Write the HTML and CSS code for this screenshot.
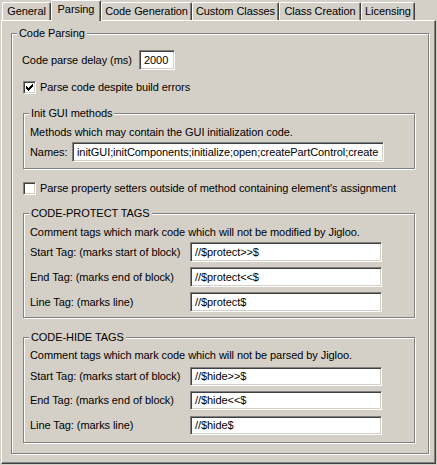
FILE: index.html
```html
<!DOCTYPE html>
<html>
<head>
<meta charset="utf-8">
<link rel="stylesheet" href="styles.css">
</head>
<body>
<div class="tabs">
  <div class="tab w-general">General</div>
  <div class="tab active w-parsing">Parsing</div>
  <div class="tab w-codegen">Code Generation</div>
  <div class="tab w-custom">Custom Classes</div>
  <div class="tab w-creation">Class Creation</div>
  <div class="tab w-licensing">Licensing</div>
</div>
<div class="panel">
  <div class="group outer">
    <span class="gtitle">Code Parsing</span>
    <div class="row delay-row"><span class="delay-label">Code parse delay (ms)</span><span class="field delay-field">2000</span></div>
    <div class="check-row first-check"><span class="cb"><svg viewBox="0 0 9 9" width="9" height="9" shape-rendering="crispEdges"><path fill="#000" d="M1 3h1v3h-1z M2 4h1v3h-1z M3 5h1v3h-1z M4 4h1v3h-1z M5 3h1v3h-1z M6 2h1v3h-1z M7 1h1v3h-1z"/></svg></span><span>Parse code despite build errors</span></div>
    <div class="group sub init">
      <span class="gtitle">Init GUI methods</span>
      <div class="desc">Methods which may contain the GUI initialization code.</div>
      <div class="row names-row"><span class="names-label">Names:</span><span class="field names-field">initGUI;initComponents;initialize;open;createPartControl;create</span></div>
    </div>
    <div class="check-row second-check"><span class="cb"></span><span>Parse property setters outside of method containing element's assignment</span></div>
    <div class="group sub protect">
      <span class="gtitle">CODE-PROTECT TAGS</span>
      <div class="desc">Comment tags which mark code which will not be modified by Jigloo.</div>
      <div class="row tag-row"><span class="tag-label">Start Tag: (marks start of block)</span><span class="field tag-field">//$protect&gt;&gt;$</span></div>
      <div class="row tag-row"><span class="tag-label">End Tag: (marks end of block)</span><span class="field tag-field">//$protect&lt;&lt;$</span></div>
      <div class="row tag-row"><span class="tag-label">Line Tag: (marks line)</span><span class="field tag-field">//$protect$</span></div>
    </div>
    <div class="group sub hide">
      <span class="gtitle">CODE-HIDE TAGS</span>
      <div class="desc">Comment tags which mark code which will not be parsed by Jigloo.</div>
      <div class="row tag-row"><span class="tag-label">Start Tag: (marks start of block)</span><span class="field tag-field">//$hide&gt;&gt;$</span></div>
      <div class="row tag-row"><span class="tag-label">End Tag: (marks end of block)</span><span class="field tag-field">//$hide&lt;&lt;$</span></div>
      <div class="row tag-row last-tag"><span class="tag-label">Line Tag: (marks line)</span><span class="field tag-field">//$hide$</span></div>
    </div>
  </div>
</div>
</body>
</html>
```

FILE: styles.css
```css
* { box-sizing: border-box; }
html, body { margin: 0; padding: 0; }
body {
  background: #d4d0c8;
  font: 11px/13px "Liberation Sans", Arial, sans-serif;
  letter-spacing: -0.07px;
  color: #000;
  width: 437px;
  height: 465px;
  overflow: hidden;
}

/* Tabs */
.tabs {
  display: flex;
  align-items: flex-end;
  height: 20px;
  padding-left: 2px;
  position: relative;
  z-index: 1;
}
.tab {
  height: 18px;
  border-top: 1px solid #fff;
  border-left: 1px solid #fff;
  border-right: 1px solid #404040;
  border-radius: 2px 2px 0 0;
  box-shadow: inset -1px 0 #808080;
  display: flex;
  align-items: center;
  justify-content: center;
  padding-bottom: 1px;
  white-space: nowrap;
}
.tab.active {
  height: 21px;
  margin-bottom: -1px;
  background: #d4d0c8;
  padding-bottom: 3px;
}
.w-general { width: 49px; }
.w-parsing { width: 50px; }
.w-codegen { width: 91px; }
.w-custom { width: 87px; }
.w-creation { width: 82px; }
.w-licensing { width: 54px; }

/* Panel */
.panel {
  margin-left: 1px;
  width: 435px;
  height: 444px;
  border-left: 1px solid #fff;
  border-top: 1px solid #fff;
  border-right: 1px solid #404040;
  border-bottom: 1px solid #404040;
  box-shadow: inset -1px -1px #808080;
  padding: 12px 0 0 9px;
}

/* Etched groups */
.group {
  position: relative;
  border: 1px solid #808080;
  box-shadow: inset 1px 1px #fff, 1px 1px #fff;
}
.gtitle {
  position: absolute;
  top: -7px;
  left: 5px;
  padding: 0 2px;
  background: #d4d0c8;
  line-height: 13px;
  white-space: nowrap;
}
.outer {
  width: 418px;
  padding: 0 0 10px 11px;
}
.sub {
  width: 392px;
  padding-left: 6px;
}

.row {
  display: flex;
  align-items: center;
  white-space: nowrap;
}
.delay-row {
  margin-top: 16px;
  margin-left: -1px;
  height: 20px;
}
.delay-label { width: 117px; }
.delay-field { width: 36px; }

.check-row {
  display: flex;
  align-items: center;
  height: 13px;
  white-space: nowrap;
}
.first-check { margin-top: 11px; }
.second-check { margin-top: 13px; }

.cb {
  flex: none;
  width: 13px;
  height: 13px;
  margin-right: 4px;
  background: #fff;
  border: 1px solid;
  border-color: #808080 #fff #fff #808080;
  box-shadow: inset 1px 1px #404040, inset -1px -1px #d4d0c8;
}
.cb svg { display: block; margin: 1px; }

.field {
  flex: none;
  height: 20px;
  background: #fff;
  border: 1px solid;
  border-color: #808080 #fff #fff #808080;
  box-shadow: inset 1px 1px #404040, inset -1px -1px #d4d0c8;
  padding: 0 3px 0 4px;
  display: flex;
  align-items: center;
  white-space: nowrap;
  overflow: hidden;
}

.desc { white-space: nowrap; }

.init { margin-top: 19px; padding-bottom: 6px; }
.init .desc { margin-top: 12px; }
.names-row { margin-top: 3px; }
.names-label { width: 42px; }
.names-field { width: 312px; }

.protect { margin-top: 18px; padding-bottom: 5px; }
.protect .desc { margin-top: 12px; }
.protect .tag-row { margin-top: 5px; }
.protect .desc + .tag-row { margin-top: 3px; }

.tag-label { width: 160px; }
.tag-field { width: 192px; }

.hide { margin-top: 19px; padding-bottom: 7px; }
.hide .desc { margin-top: 11px; }
.hide .tag-row { margin-top: 5px; }
.hide .field { height: 19px; }
.hide .last-tag { margin-top: 6px; }
```
